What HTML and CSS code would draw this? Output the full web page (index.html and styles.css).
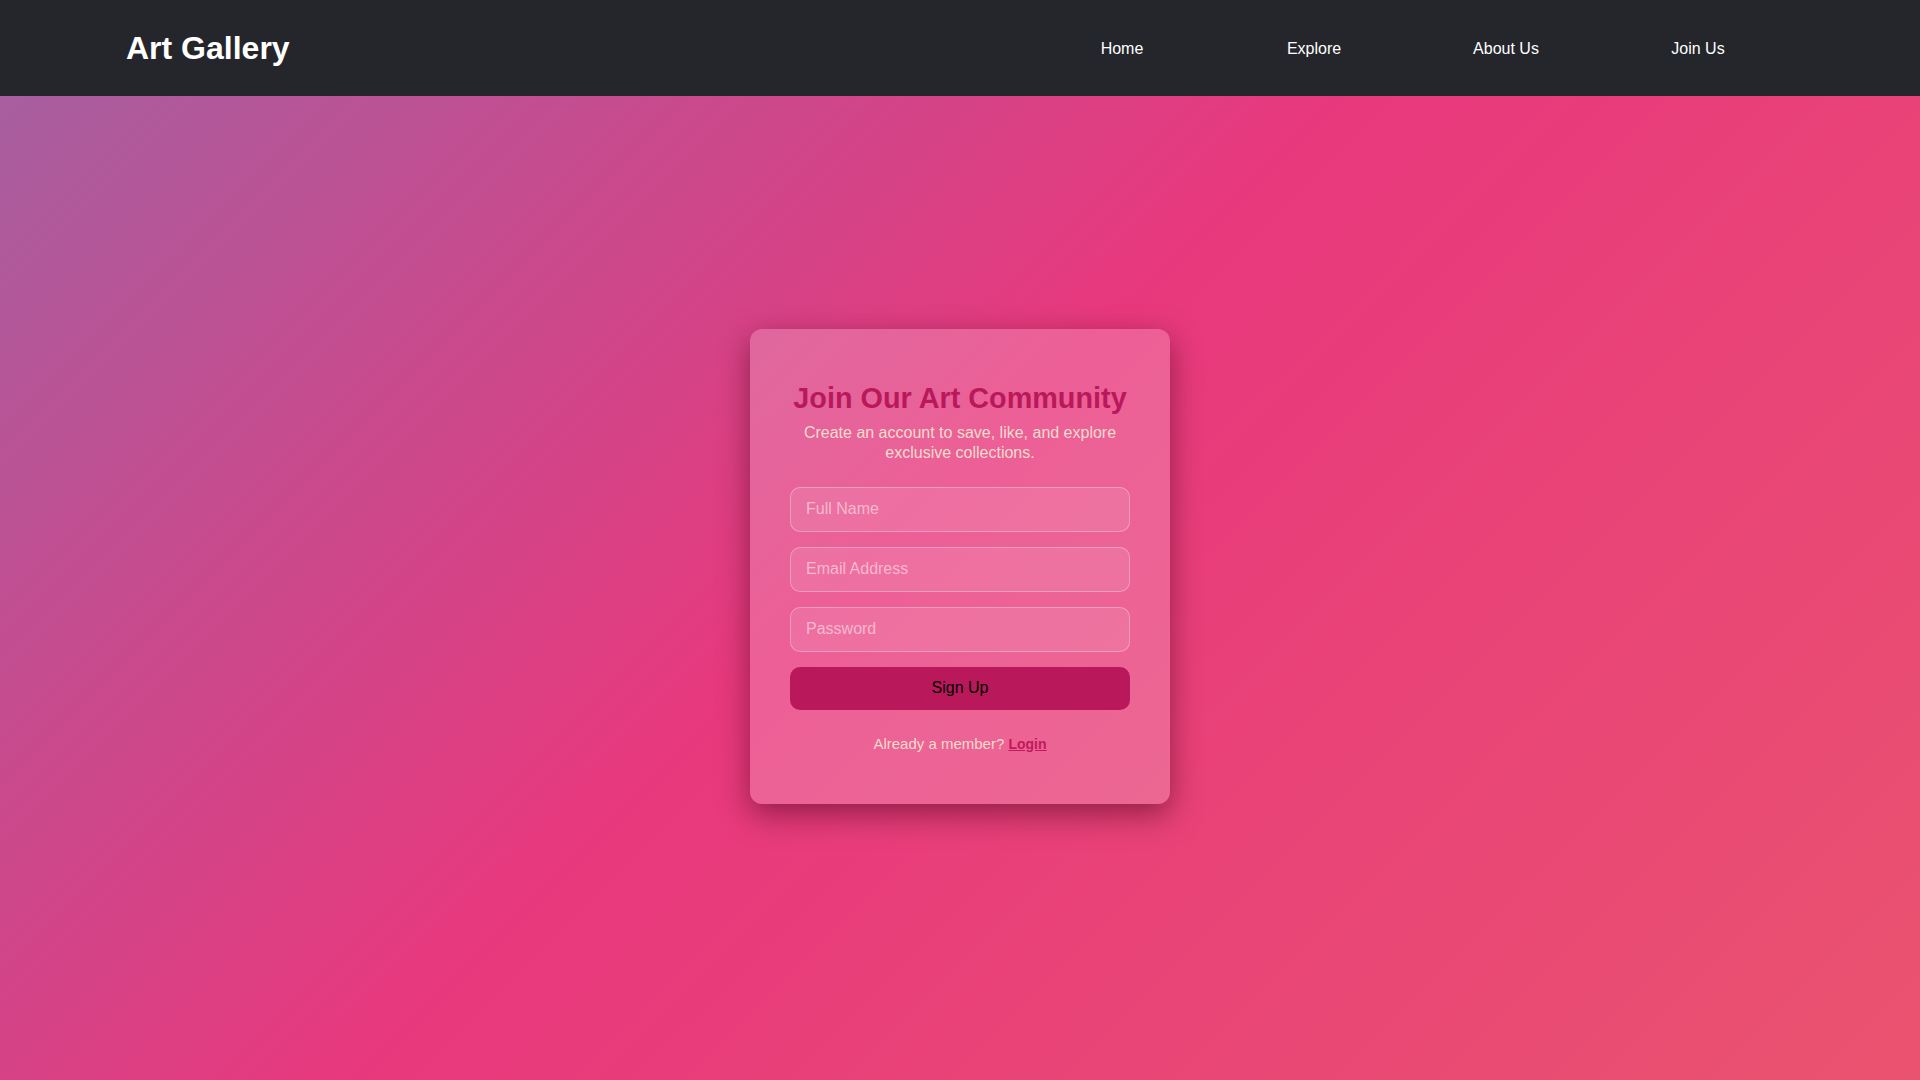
FILE: index.html
```html
<!DOCTYPE html>
<html lang="en">
<head>
<meta charset="UTF-8">
<title>Art Gallery - Join Us</title>
<link rel="stylesheet" href="styles.css">
</head>
<body>
<header class="site-header">
  <div class="logo">Art Gallery</div>
  <nav class="nav">
    <a href="#" class="nav-link">Home</a>
    <a href="#" class="nav-link">Explore</a>
    <a href="#" class="nav-link">About Us</a>
    <a href="#" class="nav-link">Join Us</a>
  </nav>
</header>
<main class="main">
  <section class="card">
    <h2 class="card-title">Join Our Art Community</h2>
    <p class="card-sub">Create an account to save, like, and explore exclusive collections.</p>
    <form class="form">
      <input class="field" type="text" placeholder="Full Name">
      <input class="field" type="email" placeholder="Email Address">
      <input class="field" type="password" placeholder="Password">
      <button class="btn" type="button">Sign Up</button>
    </form>
    <p class="login-line">Already a member? <a href="#" class="login-link">Login</a></p>
  </section>
</main>
</body>
</html>
```
FILE: styles.css
```css
* { box-sizing: border-box; }
html, body { margin: 0; padding: 0; }
body {
  font-family: "Liberation Sans", Arial, sans-serif;
  min-height: 100vh;
  display: flex;
  flex-direction: column;
  background: #e8387d;
}
.site-header {
  height: 96px;
  background: #25262b;
  display: flex;
  align-items: center;
  justify-content: space-between;
  padding: 0 126px;
  flex-shrink: 0;
}
.logo {
  color: #ffffff;
  font-size: 32px;
  font-weight: bold;
}
.nav {
  display: grid;
  grid-template-columns: repeat(4, 192px);
  padding-top: 2px;
}
.nav-link {
  color: #ffffff;
  text-decoration: none;
  font-size: 16px;
  text-align: center;
}
.main {
  flex: 1;
  display: flex;
  align-items: center;
  justify-content: center;
  padding-bottom: 43px;
  background: linear-gradient(135deg, #a75e9f 0%, #e8387d 46%, #ea536f 100%);
}
.card {
  width: 420px;
  padding: 53px 40px 52px;
  border-radius: 12px;
  background: rgba(255, 255, 255, 0.2);
  box-shadow: 0 10px 30px rgba(60, 0, 20, 0.5);
  text-align: center;
}
.card-title {
  margin: 0 0 8px;
  font-size: 28.8px;
  font-weight: bold;
  color: #b9195b;
}
.card-sub {
  margin: 0 0 25px;
  font-size: 16px;
  line-height: 19.2px;
  color: #f6dccb;
}
.form {
  display: flex;
  flex-direction: column;
  gap: 15px;
}
.field {
  height: 45px;
  padding: 0 15px;
  border: 1px solid rgba(255, 255, 255, 0.3);
  border-radius: 10px;
  background: rgba(255, 255, 255, 0.1);
  font-family: "Liberation Sans", Arial, sans-serif;
  font-size: 16px;
  color: #ffffff;
  outline: none;
}
.field::placeholder {
  color: rgba(250, 200, 215, 0.85);
}
.btn {
  height: 43px;
  border: none;
  border-radius: 10px;
  background: #b9195b;
  color: #000000;
  font-family: "Liberation Sans", Arial, sans-serif;
  font-size: 16px;
  cursor: pointer;
}
.login-line {
  margin: 25px 0 0;
  font-size: 15px;
  color: #f6dccb;
}
.login-link {
  color: #c2185b;
  font-weight: bold;
  font-size: 14px;
}
```
